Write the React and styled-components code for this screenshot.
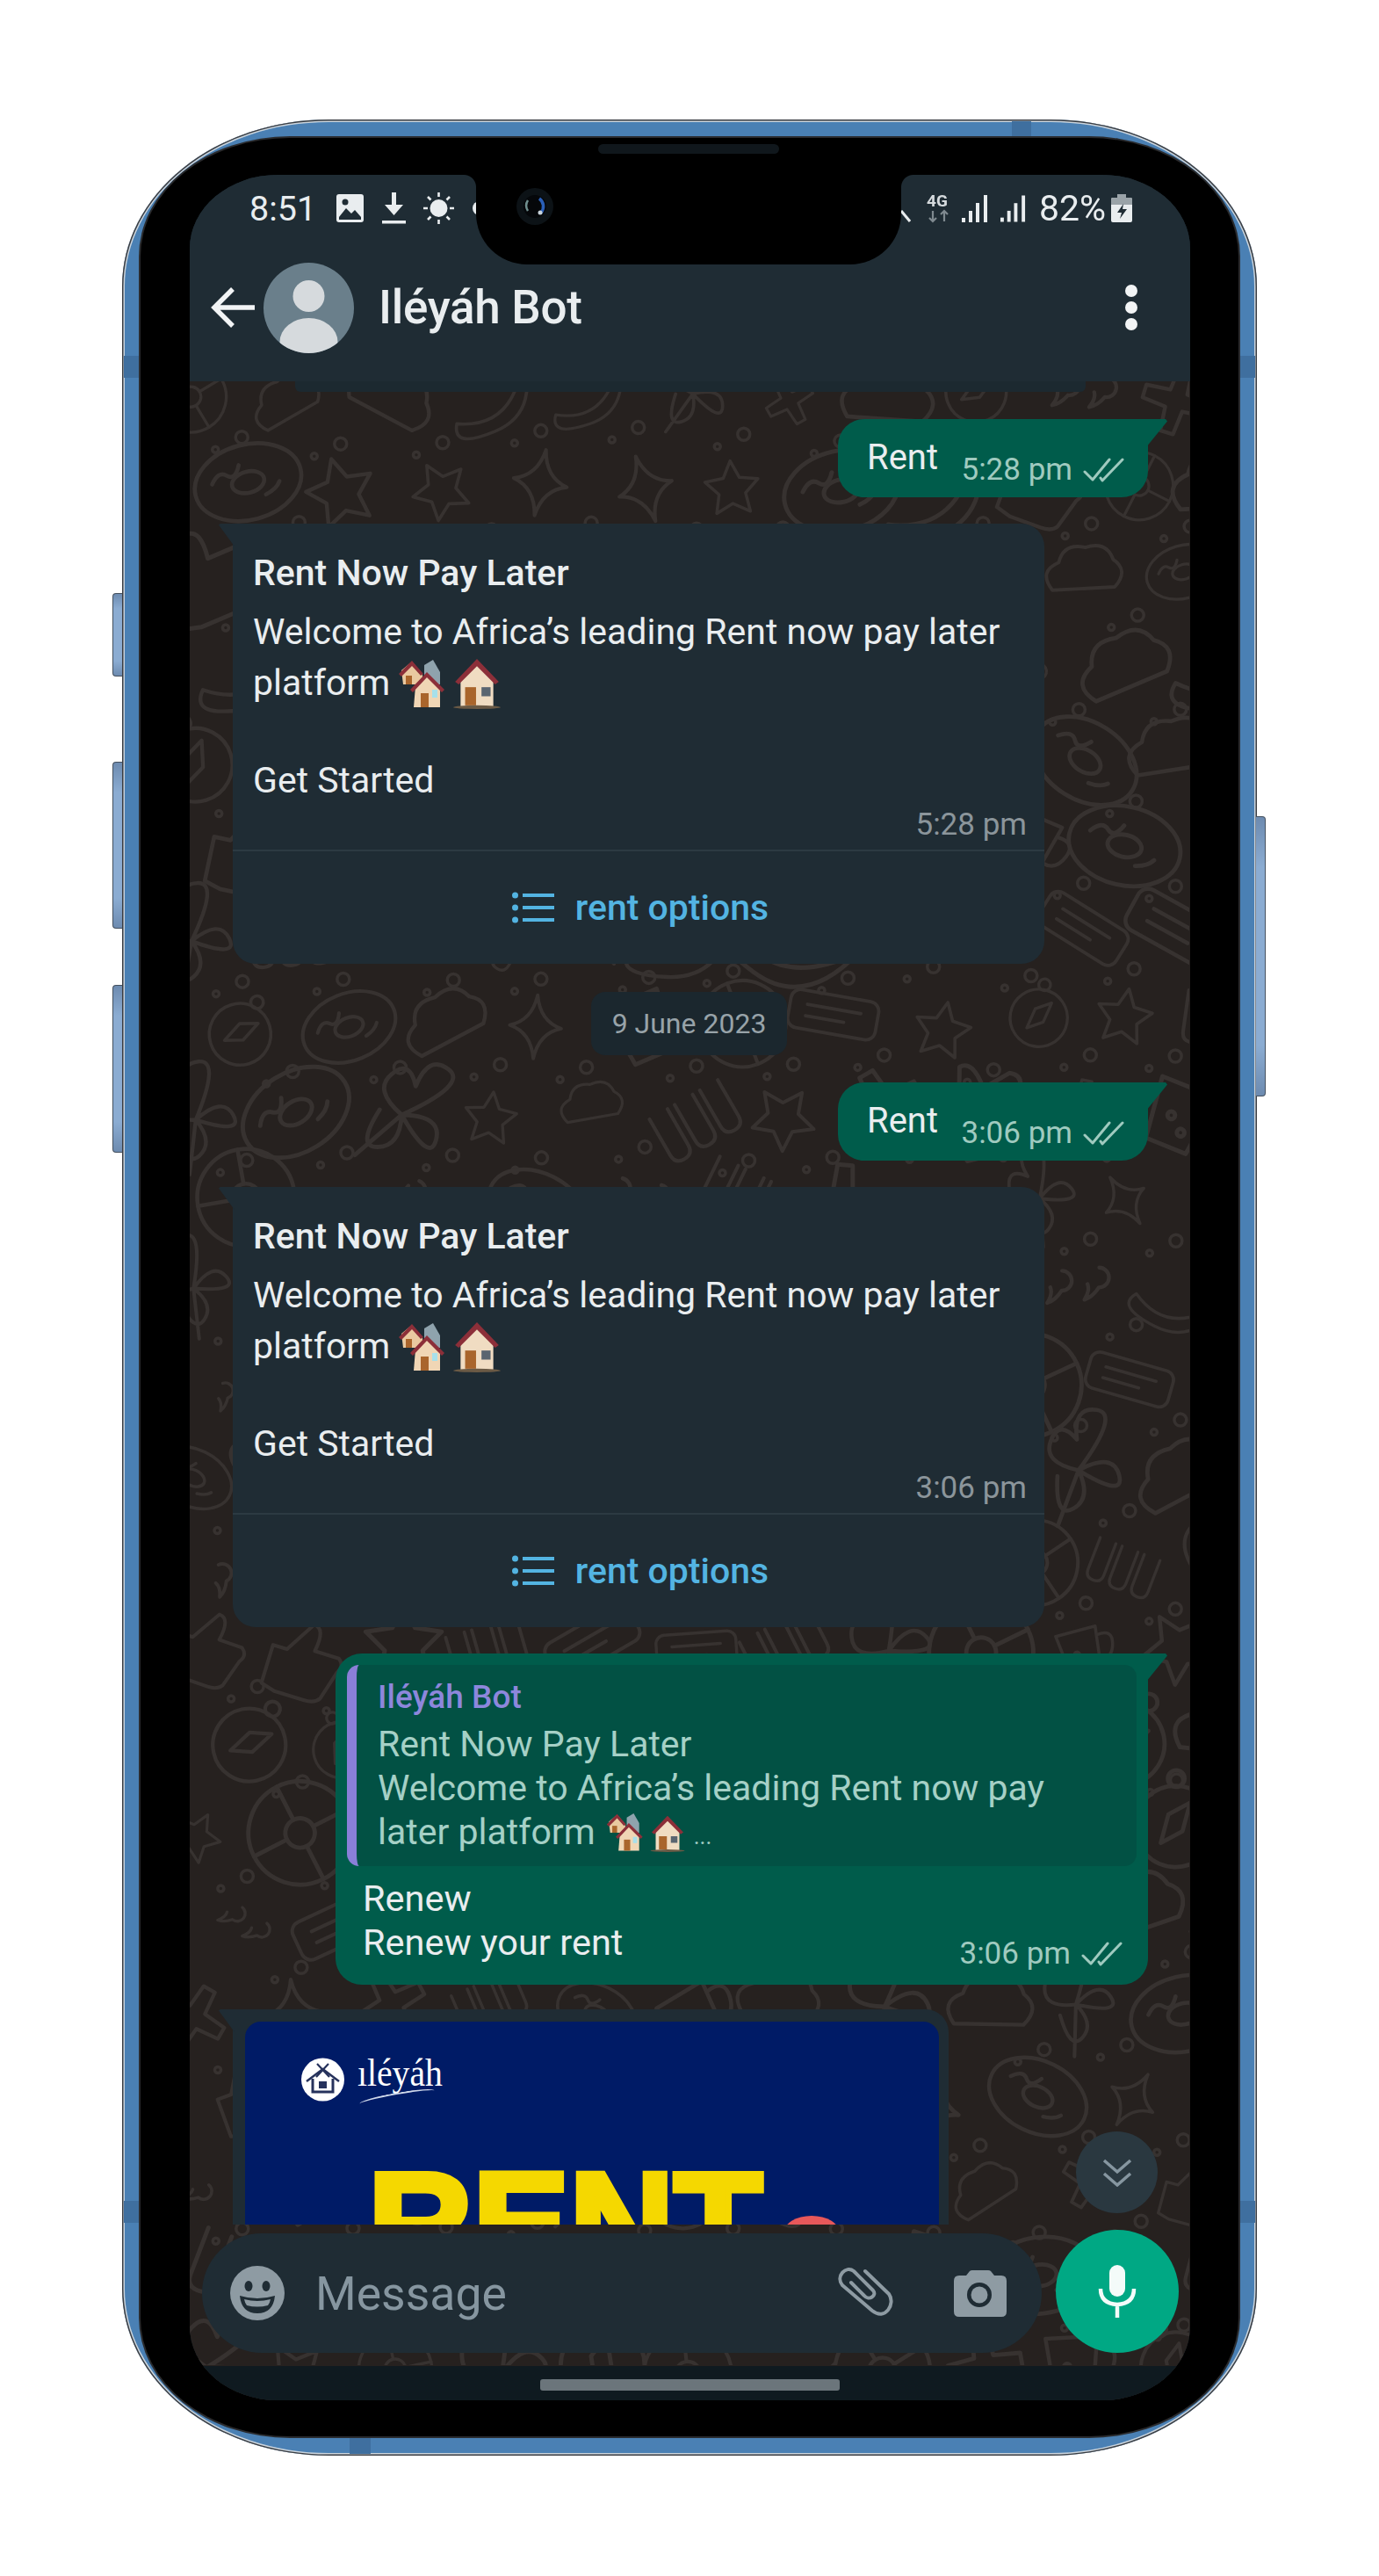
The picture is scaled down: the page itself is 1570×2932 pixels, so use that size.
import styled, { createGlobalStyle } from "styled-components";

const GlobalStyle = createGlobalStyle`
  html, body {
    margin: 0;
    padding: 0;
    background: #fff;
    font-family: Roboto, "Liberation Sans", sans-serif;
  }
`;

const Stage = styled.div`
  width: 1570px;
  height: 2932px;
  box-sizing: border-box;
  padding: 136px 139px 0 139px;
  background: #fff;
`;

const Phone = styled.div`
  position: relative;
  width: 1292px;
  height: 2659px;
  box-sizing: border-box;
  padding: 21px 21px 22px 21px;
  display: flex;
  background: #4a80b4;
  border-radius: 235px / 190px;
  box-shadow: inset 0 0 0 1.5px #3a3d42, inset 0 0 0 3px #c9d3dc;
`;

const SideKey = styled.div`
  position: absolute;
  top: ${(p) => p.$top}px;
  height: ${(p) => p.$height}px;
  ${(p) => (p.$right ? "right: -10px;" : "left: -11px;")}
  width: 11px;
  box-sizing: border-box;
  background: linear-gradient(180deg, #6d8bb0, #8bacd2 18%, #8bacd2 82%, #6d8bb0);
  border: 1.5px solid #44505e;
  ${(p) => (p.$right ? "border-left: none; border-radius: 0 4px 4px 0;" : "border-right: none; border-radius: 4px 0 0 4px;")}
`;

const Band = styled.div`
  position: absolute;
  background: #3f6f9f;
  ${(p) => p.$place}
`;

const Bezel = styled.div`
  position: relative;
  flex: 1;
  display: flex;
  box-sizing: border-box;
  padding: 42px 55px 41px 56px;
  background: #000;
  border-radius: 170px / 135px;
  box-shadow: 0 0 0 2px #2a2b2e;
`;

const Notch = styled.div`
  position: absolute;
  z-index: 5;
  left: 382px;
  top: 0;
  width: 484px;
  height: 144px;
  background: #000;
  border-radius: 0 0 58px 58px;

  &::before,
  &::after {
    content: "";
    position: absolute;
    top: 42px;
    width: 14px;
    height: 14px;
  }
  &::before {
    left: -14px;
    background: radial-gradient(circle at 0 100%, transparent 13.5px, #000 14.5px);
  }
  &::after {
    right: -14px;
    background: radial-gradient(circle at 100% 100%, transparent 13.5px, #000 14.5px);
  }
`;

const Speaker = styled.div`
  position: absolute;
  left: 139px;
  top: 7px;
  width: 206px;
  height: 11px;
  border-radius: 6px;
  background: #10171c;
`;

const Camera = styled.svg`
  position: absolute;
  left: 46px;
  top: 57px;
  width: 42px;
  height: 42px;
`;

const Screen = styled.div`
  flex: 1;
  min-width: 0;
  display: flex;
  flex-direction: column;
  overflow: hidden;
  border-radius: 100px / 84px;
  background: #1f2c34;
  filter: blur(0.5px);
`;

const Header = styled.header`
  position: relative;
  z-index: 3;
  height: 235px;
  flex: none;
  display: flex;
  flex-direction: column;
  background: #1f2c34;
  color: #fff;

  &::after {
    content: "";
    position: absolute;
    left: 120px;
    top: 235px;
    width: 900px;
    height: 12px;
    background: #1c2930;
    border-radius: 0 0 6px 6px;
  }
`;

const StatusBar = styled.div`
  height: 70px;
  flex: none;
  box-sizing: border-box;
  padding: 0 66px 0 68px;
  margin-top: 3px;
  display: flex;
  align-items: center;
  justify-content: space-between;
  color: #e9edef;
  font-size: 39.5px;
`;

const StatusGroup = styled.div`
  display: flex;
  align-items: center;
  gap: ${(p) => p.$gap}px;
`;

const BatteryText = styled.span`
  font-size: 41px;
  margin-left: 1px;
  margin-right: -7px;
`;

const AppBar = styled.div`
  height: 156px;
  flex: none;
  box-sizing: border-box;
  padding: 0 60px 0 24px;
  display: flex;
  align-items: center;
`;

const Avatar = styled.svg`
  width: 103px;
  height: 103px;
  margin-left: 10px;
  margin-right: 28px;
  flex: none;
`;

const Title = styled.div`
  flex: 1;
  font-size: 53px;
  font-weight: 500;
  color: #e9edef;
  letter-spacing: -0.3px;
`;

const MenuDots = styled.div`
  display: flex;
  flex-direction: column;
  gap: 5px;
`;

const MenuDot = styled.span`
  width: 14px;
  height: 14px;
  border-radius: 50%;
  background: #f2f4f5;
`;

const Chat = styled.main`
  position: relative;
  flex: 1;
  min-height: 0;
  display: flex;
  flex-direction: column;
  background: #26211f;
`;

const WallpaperSvg = styled.svg`
  position: absolute;
  left: 0;
  top: 0;
  width: 1138px;
  height: 2258px;
  fill: none;
  stroke: #373230;
  stroke-width: 3.5;
  stroke-linecap: round;
  stroke-linejoin: round;
`;

const MessageList = styled.div`
  position: relative;
  flex: 1;
  min-height: 0;
  overflow: hidden;
  box-sizing: border-box;
  padding-top: 43px;
  display: flex;
  flex-direction: column;
  gap: 30px;
`;

const OutBubble = styled.div`
  position: relative;
  flex: none;
  align-self: flex-end;
  box-sizing: border-box;
  margin-right: 48px;
  background: #005c4b;
  border-radius: 0 0 30px 30px;
  border-top-left-radius: 30px;
  color: #e9edef;

  &::after {
    content: "";
    position: absolute;
    top: 0;
    right: -22px;
    width: 24px;
    height: 32px;
    background: #005c4b;
    clip-path: polygon(0 0, 92% 0, 100% 8%, 0 100%);
  }
`;

const ShortRow = styled.div`
  width: 353px;
  height: 89px;
  box-sizing: border-box;
  padding: 0 27px 11px 33px;
  display: flex;
  align-items: flex-end;
  justify-content: space-between;
`;

const ShortText = styled.span`
  font-size: 40px;
  line-height: 58px;
  margin-bottom: 5px;
`;

const Meta = styled.span`
  display: inline-flex;
  align-items: center;
  gap: 12px;
  font-size: 35px;
  line-height: 40px;
  color: ${(p) => (p.$out ? "#9fcabf" : "#8b959b")};
  white-space: nowrap;
`;

const InBubble = styled.div`
  position: relative;
  flex: none;
  box-sizing: border-box;
  width: ${(p) => p.$width}px;
  margin-left: 49px;
  margin-top: ${(p) => p.$top || 0}px;
  background: #1f2c34;
  border-radius: 0 26px 26px 26px;
  color: #e9edef;

  &::before {
    content: "";
    position: absolute;
    top: 0;
    left: -16px;
    width: 18px;
    height: 26px;
    background: #1f2c34;
    clip-path: polygon(10% 0, 100% 0, 100% 100%, 0 6%);
  }
`;

const CardBody = styled.div`
  padding: 27px 24px 8px 23px;
`;

const CardTitle = styled.div`
  font-size: 41px;
  line-height: 58px;
  font-weight: 500;
`;

const CardText = styled.div`
  margin-top: 9px;
  font-size: 41px;
  line-height: 58px;
  white-space: nowrap;
`;

const CardAction = styled(CardText)`
  margin-top: 52px;
`;

const CardMeta = styled.div`
  margin-top: 2px;
  margin-right: -4px;
  display: flex;
  justify-content: flex-end;
`;

const OptionsButton = styled.div`
  height: 130px;
  border-top: 2px solid #2c3a42;
  box-sizing: border-box;
  padding-left: 4px;
  display: flex;
  align-items: center;
  justify-content: center;
  gap: 24px;
  color: #53b4e2;
  font-size: 41px;
  font-weight: 500;
`;

const HouseIcon = styled.svg`
  width: ${(p) => p.$size}px;
  height: ${(p) => p.$size}px;
  vertical-align: ${(p) => p.$drop}px;
  margin-left: ${(p) => p.$gap}px;
`;

const DatePill = styled.div`
  flex: none;
  align-self: center;
  margin: 2px 0 1px 0;
  transform: translateX(-1px);
  width: 223px;
  height: 72px;
  display: flex;
  align-items: center;
  justify-content: center;
  background: #1b272e;
  border-radius: 16px;
  color: #98a3a9;
  font-size: 32px;
  white-space: nowrap;
`;

const ReplyBody = styled.div`
  width: 925px;
  height: 377px;
  box-sizing: border-box;
  padding: 13px 13px 0 13px;
`;

const Quote = styled.div`
  height: 229px;
  box-sizing: border-box;
  padding: 15px 0 0 24px;
  background: #025144;
  border-left: 11px solid #8a7fd8;
  border-radius: 14px;
`;

const QuoteName = styled.div`
  font-size: 37px;
  line-height: 44px;
  font-weight: 500;
  color: #8d87dc;
`;

const QuoteText = styled.div`
  margin-top: 6px;
  font-size: 41px;
  line-height: 50px;
  color: #a5d0c6;
  white-space: nowrap;
`;

const Ellipsis = styled.span`
  font-size: 26px;
  margin-left: 9px;
`;

const ReplyFoot = styled.div`
  display: flex;
  align-items: flex-end;
  justify-content: space-between;
  padding: 12px 16px 0 18px;
`;

const ReplyText = styled.div`
  font-size: 41.5px;
  line-height: 50px;
  margin-bottom: 8px;
`;

const MediaFrame = styled.div`
  position: relative;
  height: 420px;
  margin: 14px 11px 0 14px;
  background: #001b66;
  border-radius: 18px;
  overflow: hidden;
  padding: 41px 0 0 64px;
`;

const LogoRow = styled.div`
  display: flex;
  align-items: flex-start;
  gap: 15px;
  height: 50px;
`;

const LogoMark = styled.svg`
  width: 49px;
  height: 50px;
  flex: none;
`;

const LogoWord = styled.div`
  position: relative;
  margin-top: -4px;
  font-family: "Liberation Serif", serif;
  font-size: 44px;
  line-height: 44px;
  color: #fff;
  transform: scaleX(0.9);
  transform-origin: left;

  &::after {
    content: "";
    position: absolute;
    left: 2px;
    top: 44px;
    width: 96px;
    height: 8px;
    border-top: 2.5px solid #cfd8ea;
    border-radius: 50%;
    transform: rotate(-9deg);
  }
`;

const Headline = styled.div`
  margin: 57px 0 0 76px;
  font-family: "Liberation Sans", sans-serif;
  font-size: 165px;
  line-height: 165px;
  font-weight: 700;
  color: #f5d800;
  -webkit-text-stroke: 7px #f5d800;
`;

const RedDome = styled.div`
  position: absolute;
  left: 613px;
  top: 221px;
  width: 64px;
  height: 40px;
  background: #e8585a;
  border-radius: 50%;
`;

const ScrollDown = styled.div`
  position: absolute;
  z-index: 2;
  right: 37px;
  bottom: 213px;
  width: 93px;
  height: 93px;
  border-radius: 50%;
  background: #2a3840;
  display: flex;
  align-items: center;
  justify-content: center;
`;

const Composer = styled.div`
  position: relative;
  flex: none;
  height: 140px;
  margin-top: 6px;
  margin-bottom: 15px;
  padding: 0 13px 0 14px;
  display: flex;
  align-items: flex-end;
  justify-content: space-between;
`;

const InputPill = styled.div`
  width: 956px;
  height: 136px;
  box-sizing: border-box;
  padding: 0 40px 0 32px;
  border-radius: 68px;
  background: #1f2c34;
  display: flex;
  align-items: center;
`;

const Placeholder = styled.span`
  flex: 1;
  margin-left: 35px;
  font-size: 53.5px;
  color: #8696a0;
`;

const ClipIcon = styled.svg`
  width: 66px;
  height: 60px;
  margin-right: 68px;
  flex: none;
  overflow: visible;
`;

const MicButton = styled.div`
  width: 140px;
  height: 140px;
  border-radius: 50%;
  background: #00a884;
  display: flex;
  align-items: center;
  justify-content: center;
`;

const NavBar = styled.div`
  height: 39px;
  flex: none;
  position: relative;
  background: #0f1a20;
  display: flex;
  justify-content: center;
  padding-top: 15px;
  box-sizing: border-box;
`;

const NavHandle = styled.div`
  width: 341px;
  height: 13px;
  border-radius: 3px;
  background: #6b757b;
`;

// seeded scatter so the wallpaper stays the same between runs
function rng(seed) {
  let s = seed;
  return () => {
    s = (s * 1664525 + 1013904223) % 4294967296;
    return s / 4294967296;
  };
}

const doodleShapes = [
  // donut
  <g key="a">
    <ellipse cx="0" cy="0" rx="46" ry="32" />
    <ellipse cx="0" cy="0" rx="14" ry="9" />
    <path d="M-30 -6q8 -10 14 -4t12 -6M12 14q10 -2 14 -8" />
  </g>,
  // star
  <path key="b" d="M0 -30l9 19 21 3-15 15 4 21-19-10-19 10 4-21-15-15 21-3z" />,
  // sparkle
  <path key="c" d="M0 -32q4 26 26 32q-22 6-26 32q-4-26-26-32q22-6 26-32z" />,
  // cup
  <g key="d">
    <path d="M-26 -24h46l-6 50h-34z" />
    <path d="M20 -14q18 -2 14 14t-18 14" />
    <circle cx="-8" cy="2" r="3" />
    <circle cx="4" cy="12" r="3" />
  </g>,
  // clover
  <path key="e" d="M0 0q-30-8-22-26t22 0q-2-28 18-24t-18 50q30-14 34 6t-34-6q10 24-6 32t-12-28M0 0l-20 46" />,
  // ticket
  <g key="f">
    <rect x="-46" y="-20" width="92" height="40" rx="10" />
    <path d="M-28 -6h56M-28 6h40" />
  </g>,
  // wheel
  <g key="g">
    <circle cx="0" cy="0" r="42" />
    <circle cx="0" cy="0" r="12" />
    <path d="M0 -42v30M0 12v30M-42 0h30M12 0h30" />
  </g>,
  // cross flower
  <path key="h" d="M-6 -30h12l2 22 22 2v12l-22 2-2 22h-12l-2-22-22-2v-12l22-2z" />,
  // cloud
  <path key="i" d="M-36 14q-14-20 8-28q6-20 28-14q22-6 28 14q16 12 0 28z" />,
  // thumb
  <path key="j" d="M-30 -4h14l18-30q12 0 8 24h24q8 6 2 14l-8 28q-4 6-14 6h-30l-14-4z" />,
  // quotes
  <path key="k" d="M-20 -14a9 9 0 1 1 -2 18q-6 8-14 10q6-8 4-14M14 -14a9 9 0 1 1 -2 18q-6 8-14 10q6-8 4-14" />,
  // compass
  <g key="l">
    <circle cx="0" cy="4" r="34" />
    <circle cx="0" cy="-36" r="7" />
    <path d="M-12 18l6-24 18-10-6 24z" />
  </g>,
  // crescent swoosh
  <path key="m" d="M-50 10q50 40 100-20q-20 60-70 50t-30-30z" />,
  // comb of tubes
  <path key="n" d="M-40 -24v40q0 10 10 10t10-10v-40M-12 -24v40q0 10 10 10t10-10v-40M16 -24v40q0 10 10 10t10-10v-40" />,
];

function Wallpaper() {
  const rand = rng(4711);
  const items = [];
  for (let row = 0; row < 23; row++) {
    for (let col = 0; col < 11; col++) {
      const x = col * 112 + (row % 2) * 56 + rand() * 20;
      const y = row * 102 + 6 + rand() * 20;
      const shape = doodleShapes[Math.floor(rand() * doodleShapes.length)];
      const angle = Math.round(rand() * 70 - 35);
      const scale = (0.9 + rand() * 0.55).toFixed(2);
      items.push(
        <g key={`${row}-${col}`} transform={`translate(${x} ${y}) rotate(${angle}) scale(${scale})`}>
          {shape}
        </g>
      );
      items.push(<circle key={`r${row}-${col}`} cx={x + 58} cy={y + 46} r={7} />);
      items.push(<circle key={`d${row}-${col}`} cx={x + 28} cy={y + 60} r={3.5} />);
    }
  }
  return <WallpaperSvg aria-hidden="true">{items}</WallpaperSvg>;
}

const Ticks = () => (
  <svg width="47" height="28" viewBox="0 0 47 28" fill="none" stroke="#9fcabf" strokeWidth="3" strokeLinecap="round" strokeLinejoin="round">
    <path d="M2 16l9 9L30 2" />
    <path d="M20 23l2 3L45 2" />
  </svg>
);

const ListGlyph = () => (
  <svg width="48" height="36" viewBox="0 0 48 36" fill="#53b4e2">
    <circle cx="3.5" cy="4" r="3.5" />
    <circle cx="3.5" cy="18" r="3.5" />
    <circle cx="3.5" cy="32" r="3.5" />
    <rect x="12" y="2" width="36" height="4" />
    <rect x="12" y="16" width="36" height="4" />
    <rect x="12" y="30" width="36" height="4" />
  </svg>
);

const Houses = ({ size, drop, gap }) => (
  <HouseIcon $size={size} $drop={drop} $gap={gap} viewBox="0 0 56 56">
    <path d="M30 6l10-6 8 14v14H30z" fill="#8fa3ad" />
    <path d="M4 12L16 2l12 14v12H6z" fill="#e9c9a0" />
    <path d="M1 16L16 1l13 15-3 2L16 7 4 19z" fill="#8c2f39" />
    <path d="M20 30L33 16l15 14v24H18z" fill="#f0d6b5" />
    <path d="M14 34L33 14l20 20-3 3L33 20 17 37z" fill="#8c2f39" />
    <rect x="26" y="38" width="9" height="16" fill="#a9652c" />
    <rect x="39" y="34" width="6" height="9" fill="#a8e0ea" />
    <rect x="9" y="18" width="7" height="10" fill="#a9652c" />
  </HouseIcon>
);

const Cottage = ({ size, drop, gap }) => (
  <HouseIcon $size={size} $drop={drop} $gap={gap} viewBox="0 0 56 56">
    <path d="M10 26L28 6l18 20v28H10z" fill="#f0dcc2" />
    <path d="M4 26L28 1l24 25-4 3L28 9 8 29z" fill="#8c2f39" />
    <rect x="15" y="32" width="12" height="20" fill="#a9652c" />
    <rect x="33" y="32" width="10" height="10" fill="#5a6570" />
    <ellipse cx="28" cy="54" rx="26" ry="2" fill="#6b5a45" />
  </HouseIcon>
);

const Bubble = ({ time }) => (
  <OutBubble>
    <ShortRow>
      <ShortText>Rent</ShortText>
      <Meta $out>
        {time}
        <Ticks />
      </Meta>
    </ShortRow>
  </OutBubble>
);

const RentCard = ({ time }) => (
  <InBubble $width={924}>
    <CardBody>
      <CardTitle>Rent Now Pay Later</CardTitle>
      <CardText>
        Welcome to Africa’s leading Rent now pay later
        <br />
        platform
        <Houses size={56} drop={-16} gap={9} />
        <Cottage size={58} drop={-16} gap={5} />
      </CardText>
      <CardAction>Get Started</CardAction>
      <CardMeta>
        <Meta>{time}</Meta>
      </CardMeta>
    </CardBody>
    <OptionsButton>
      <ListGlyph />
      rent options
    </OptionsButton>
  </InBubble>
);

export default function App() {
  return (
    <Stage>
      <GlobalStyle />
      <Phone>
        <SideKey $top={539} $height={95} />
        <SideKey $top={731} $height={190} />
        <SideKey $top={985} $height={191} />
        <SideKey $right $top={793} $height={319} />
        <Band $place="left: 1013px; top: 2px; width: 22px; height: 18px;" />
        <Band $place="left: 259px; bottom: 2px; width: 24px; height: 18px;" />
        <Band $place="left: 2px; top: 269px; width: 18px; height: 25px;" />
        <Band $place="right: 2px; top: 269px; width: 18px; height: 25px;" />
        <Band $place="left: 2px; top: 2369px; width: 18px; height: 25px;" />
        <Band $place="right: 2px; top: 2369px; width: 18px; height: 25px;" />
        <Bezel>
          <Notch>
            <Speaker />
            <Camera viewBox="0 0 42 42">
              <circle cx="21" cy="21" r="21" fill="#0c1216" />
              <circle cx="21" cy="21" r="13" fill="#05070a" />
              <path d="M26 12a11 11 0 0 1 2 16" stroke="#2a5fb8" strokeWidth="3.5" fill="none" />
              <path d="M13 14a11 11 0 0 0 0 12" stroke="#6f8f8f" strokeWidth="2.5" fill="none" />
              <circle cx="27" cy="28" r="2.5" fill="#c9d3dc" />
            </Camera>
          </Notch>
          <Screen>
            <Header>
              <StatusBar>
                <StatusGroup $gap={20}>
                  <span>8:51</span>
                  <svg width="33" height="34" viewBox="0 0 33 34" style={{ marginLeft: 2 }}>
                    <rect x="1" y="1" width="31" height="32" rx="3" fill="#e9edef" />
                    <rect x="4" y="4" width="25" height="26" rx="1" fill="#e9edef" />
                    <path d="M4 27l8-10 6 6 4-4 7 8v3H4z" fill="#1f2c34" />
                    <circle cx="11" cy="10" r="3.5" fill="#1f2c34" />
                  </svg>
                  <svg width="27" height="36" viewBox="0 0 27 36" fill="#e9edef">
                    <path d="M11 0h5v14h8L13.5 26 3 14h8z" />
                    <rect x="0" y="32" width="27" height="3.5" />
                  </svg>
                  <svg width="35" height="36" viewBox="0 0 35 36" fill="#e9edef">
                    <circle cx="17.5" cy="18" r="10" />
                    <path d="M17.5 0v5M17.5 31v5M0 18h5M30 18h5M5 5l3.5 3.5M26.5 27.5L30 31M5 31l3.5-3.5M26.5 8.5L30 5" stroke="#e9edef" strokeWidth="2.6" />
                  </svg>
                  <svg width="18" height="18" viewBox="0 0 18 18" fill="#e9edef">
                    <circle cx="9" cy="9" r="8" />
                  </svg>
                </StatusGroup>
                <StatusGroup $gap={13}>
                  <svg width="12" height="14" viewBox="0 0 12 14" stroke="#e9edef" strokeWidth="3" style={{ marginTop: 18 }}>
                    <path d="M1 1l10 12" />
                  </svg>
                  <svg width="27" height="34" viewBox="0 0 27 34" style={{ marginLeft: 5 }}>
                    <text x="0" y="15" fontSize="19" fontWeight="700" fontFamily="Roboto, sans-serif" fill="#d5dadd">4G</text>
                    <path d="M7 20v12M3 28l4 4 4-4M20 32V20M16 24l4-4 4 4" fill="none" stroke="#7f8a90" strokeWidth="2.2" />
                  </svg>
                  <svg width="31" height="31" viewBox="0 0 31 31" fill="#e9edef">
                    <rect x="0" y="26" width="4" height="5" />
                    <rect x="8" y="18" width="4" height="13" />
                    <rect x="16" y="9" width="4" height="22" />
                    <rect x="25" y="0" width="4" height="31" />
                  </svg>
                  <svg width="30" height="31" viewBox="0 0 31 31" fill="#e9edef">
                    <rect x="0" y="26" width="4" height="5" />
                    <rect x="8" y="18" width="4" height="13" />
                    <rect x="16" y="9" width="4" height="22" />
                    <rect x="25" y="0" width="4" height="31" />
                  </svg>
                  <BatteryText>82%</BatteryText>
                  <svg width="24" height="32" viewBox="0 0 24 32">
                    <path d="M7 0h10v4h5q2 0 2 2v24q0 2-2 2H2q-2 0-2-2V6q0-2 2-2h5z" fill="#e9edef" />
                    <path d="M7 0h10v4h5q2 0 2 2v6H0V6q0-2 2-2h5z" fill="#9aa3a8" />
                    <path d="M14 11l-7 10h5l-2 7 8-11h-5z" fill="#1f2c34" />
                  </svg>
                </StatusGroup>
              </StatusBar>
              <AppBar>
                <svg width="50" height="46" viewBox="0 0 50 46" fill="none" stroke="#f2f4f5" strokeWidth="5.5">
                  <path d="M50 23H4M25 2L4 23l21 21" />
                </svg>
                <Avatar viewBox="0 0 103 103">
                  <defs>
                    <clipPath id="avatarClip">
                      <circle cx="51.5" cy="51.5" r="51.5" />
                    </clipPath>
                  </defs>
                  <circle cx="51.5" cy="51.5" r="51.5" fill="#6a7f8b" />
                  <g clipPath="url(#avatarClip)" fill="#d6dadd">
                    <ellipse cx="51.5" cy="38" rx="18" ry="18" />
                    <ellipse cx="51.5" cy="90" rx="33" ry="27" />
                  </g>
                </Avatar>
                <Title>Iléyáh Bot</Title>
                <MenuDots>
                  <MenuDot />
                  <MenuDot />
                  <MenuDot />
                </MenuDots>
              </AppBar>
            </Header>
            <Chat>
              <Wallpaper />
              <MessageList>
                <Bubble time="5:28 pm" />
                <RentCard time="5:28 pm" />
                <DatePill>9 June 2023</DatePill>
                <Bubble time="3:06 pm" />
                <RentCard time="3:06 pm" />
                <OutBubble>
                  <ReplyBody>
                    <Quote>
                      <QuoteName>Iléyáh Bot</QuoteName>
                      <QuoteText>
                        Rent Now Pay Later
                        <br />
                        Welcome to Africa’s leading Rent now pay
                        <br />
                        later platform
                        <Houses size={44} drop={-9} gap={12} />
                        <Cottage size={42} drop={-9} gap={5} />
                        <Ellipsis>...</Ellipsis>
                      </QuoteText>
                    </Quote>
                    <ReplyFoot>
                      <ReplyText>
                        Renew
                        <br />
                        Renew your rent
                      </ReplyText>
                      <Meta $out>
                        3:06 pm
                        <Ticks />
                      </Meta>
                    </ReplyFoot>
                  </ReplyBody>
                </OutBubble>
                <InBubble $width={815} $top={-2}>
                  <MediaFrame>
                    <LogoRow>
                      <LogoMark viewBox="0 0 49 50">
                        <circle cx="24.5" cy="25" r="24.5" fill="#fff" />
                        <path d="M6 27L24.5 13 43 27" fill="none" stroke="#26325c" strokeWidth="2.5" />
                        <path d="M13 24v15h23V24" fill="none" stroke="#26325c" strokeWidth="3" />
                        <path d="M18 7l14 15M31 7L17 22" stroke="#26325c" strokeWidth="2.2" />
                        <rect x="20" y="27" width="9" height="8" fill="#26325c" />
                      </LogoMark>
                      <LogoWord>ıléyáh</LogoWord>
                    </LogoRow>
                    <Headline>RENT</Headline>
                    <RedDome />
                  </MediaFrame>
                </InBubble>
              </MessageList>
              <ScrollDown>
                <svg width="36" height="32" viewBox="0 0 36 32" fill="none" stroke="#8696a0" strokeWidth="3.5">
                  <path d="M3 2l15 13L33 2M3 17l15 13 15-13" />
                </svg>
              </ScrollDown>
              <Composer>
                <InputPill>
                  <svg width="62" height="62" viewBox="0 0 62 62">
                    <circle cx="31" cy="31" r="31" fill="#8e9ba3" />
                    <ellipse cx="21" cy="23" rx="4.5" ry="6" fill="#1f2c34" />
                    <ellipse cx="41" cy="23" rx="4.5" ry="6" fill="#1f2c34" />
                    <path d="M11 34q20 6 40 0q-2 20-20 20T11 34z" fill="#1f2c34" />
                    <path d="M16 38q15 4 30 0q-1 5-3 7q-12 3-24 0q-2-2-3-7z" fill="#8e9ba3" />
                  </svg>
                  <Placeholder>Message</Placeholder>
                  <ClipIcon viewBox="0 0 66 60" fill="none" stroke="#8e9ba3" strokeWidth="4" strokeLinecap="round" strokeLinejoin="round">
                    <path d="M33 5L60 31C68 42 56 62 41 50L7 21C-1 11 11-2 20 5L42 27C47 33 37 39 32 33L17 18" />
                  </ClipIcon>
                  <svg width="60" height="53" viewBox="0 0 60 53">
                    <path d="M14 6l4-5q1-1 3-1h18q2 0 3 1l4 5h8q6 0 6 6v35q0 6-6 6H6q-6 0-6-6V12q0-6 6-6z" fill="#8e9ba3" />
                    <circle cx="29" cy="28" r="14" fill="#1f2c34" />
                    <circle cx="29" cy="28" r="9.5" fill="#8e9ba3" />
                  </svg>
                </InputPill>
                <MicButton>
                  <svg width="44" height="62" viewBox="0 0 44 62" fill="none" stroke="#f4fbf9" strokeWidth="4.5">
                    <rect x="13" y="1" width="18" height="36" rx="9" fill="#f4fbf9" stroke="none" />
                    <path d="M3 28q0 17 19 18q19-1 19-18M22 46v15" />
                  </svg>
                </MicButton>
              </Composer>
              <NavBar>
                <NavHandle />
              </NavBar>
            </Chat>
          </Screen>
        </Bezel>
      </Phone>
    </Stage>
  );
}
